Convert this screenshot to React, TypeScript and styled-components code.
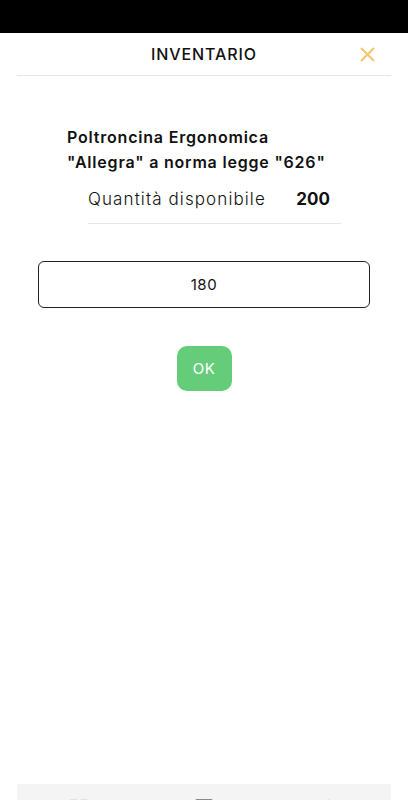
import React from "react";
import styled, { createGlobalStyle } from "styled-components";

const GlobalStyle = createGlobalStyle`
  html, body { margin: 0; padding: 0; background: #ffffff; overflow: hidden; }
  body { font-family: "Inter", "Noto Sans", sans-serif; color: #111111; }
  * { box-sizing: border-box; }
`;

const Page = styled.div`
  display: flex;
  flex-direction: column;
  min-height: calc(100vh + 44px);
`;

const StatusBar = styled.div`
  height: 33px;
  background: #000000;
`;

const Header = styled.header`
  margin: 0 17px;
  height: 43px;
  border-bottom: 1.5px solid #e6e6e6;
  display: grid;
  grid-template-columns: 1fr auto 1fr;
  align-items: center;
`;

const Title = styled.h1`
  grid-column: 2;
  margin: 0;
  font-size: 16px;
  font-weight: 500;
  letter-spacing: 0.9px;
  color: #111111;
`;

const CloseButton = styled.button`
  grid-column: 3;
  justify-self: end;
  margin-right: 16px;
  padding: 0;
  border: none;
  background: none;
  width: 15px;
  height: 15px;
  display: flex;
  align-items: center;
  justify-content: center;
  cursor: pointer;
`;

const Main = styled.main`
  flex: 1;
  display: flex;
  flex-direction: column;
  padding: 49px 38px 0;
`;

const Product = styled.section`
  display: flex;
  flex-direction: column;
`;

const ProductName = styled.h2`
  margin: 0 0 0 29px;
  font-size: 16px;
  font-weight: 600;
  line-height: 25px;
  letter-spacing: 0.8px;
  color: #111111;
`;

const QtyRow = styled.div`
  margin: 12px 29px 0 50px;
  padding-bottom: 12px;
  border-bottom: 1px solid #e6e6e6;
  display: flex;
  justify-content: space-between;
  align-items: center;
  line-height: 24px;
`;

const QtyLabel = styled.span`
  font-size: 17px;
  font-weight: 300;
  letter-spacing: 1.1px;
  color: #111111;
`;

const QtyValue = styled.span`
  font-size: 17px;
  font-weight: 700;
  margin-right: 11px;
  color: #111111;
`;

const AmountInput = styled.input`
  margin-top: 37px;
  height: 47px;
  width: 100%;
  border: 1px solid #222222;
  border-radius: 6px;
  text-align: center;
  font-family: inherit;
  font-size: 15px;
  letter-spacing: 0.6px;
  color: #111111;
  background: #ffffff;
  outline: none;
`;

const OkButton = styled.button`
  align-self: center;
  margin-top: 38px;
  width: 55px;
  height: 45px;
  border: none;
  border-radius: 10px;
  background: #65cd79;
  color: #ffffff;
  font-family: inherit;
  font-size: 15px;
  font-weight: 400;
  letter-spacing: 0.5px;
  cursor: pointer;
`;

const TabBar = styled.nav`
  margin: 0 17px;
  height: 60px;
  background: #f4f4f4;
  display: grid;
  grid-template-columns: repeat(3, 1fr);
  padding-top: 15px;
`;

const Tab = styled.div<{ $active?: boolean }>`
  display: flex;
  justify-content: center;
  color: ${(p) => (p.$active ? "#666666" : "#e2e2e2")};
`;

const XIcon = () => (
  <svg width="15" height="15" viewBox="0 0 15 15" fill="none">
    <path d="M1.5 1.5 L13.5 13.5 M13.5 1.5 L1.5 13.5" stroke="#f6c46a" strokeWidth="2" strokeLinecap="round" />
  </svg>
);

const GridIcon = () => (
  <svg width="20" height="20" viewBox="0 0 20 20" fill="none" stroke="currentColor" strokeWidth="2">
    <rect x="1" y="1" width="7" height="7" rx="1" />
    <rect x="12" y="1" width="7" height="7" rx="1" />
    <rect x="1" y="12" width="7" height="7" rx="1" />
    <rect x="12" y="12" width="7" height="7" rx="1" />
  </svg>
);

const BoxIcon = () => (
  <svg width="20" height="20" viewBox="0 0 20 20" fill="none" stroke="currentColor" strokeWidth="2.4">
    <path d="M3 1.5 H17 V18 H3 Z" />
    <path d="M7 7 H13" />
  </svg>
);

const BellIcon = () => (
  <svg width="20" height="20" viewBox="0 0 20 20" fill="none" stroke="currentColor" strokeWidth="2">
    <path d="M10 1 L18 17 H2 Z" strokeLinejoin="round" />
  </svg>
);

export default function App() {
  return (
    <>
      <GlobalStyle />
      <Page>
        <StatusBar />
        <Header>
          <Title>INVENTARIO</Title>
          <CloseButton aria-label="Chiudi">
            <XIcon />
          </CloseButton>
        </Header>
        <Main>
          <Product>
            <ProductName>
              Poltroncina Ergonomica
              <br />
              "Allegra" a norma legge "626"
            </ProductName>
            <QtyRow>
              <QtyLabel>Quantità disponibile</QtyLabel>
              <QtyValue>200</QtyValue>
            </QtyRow>
          </Product>
          <AmountInput defaultValue="180" />
          <OkButton>OK</OkButton>
        </Main>
        <TabBar>
          <Tab><GridIcon /></Tab>
          <Tab $active><BoxIcon /></Tab>
          <Tab><BellIcon /></Tab>
        </TabBar>
      </Page>
    </>
  );
}
